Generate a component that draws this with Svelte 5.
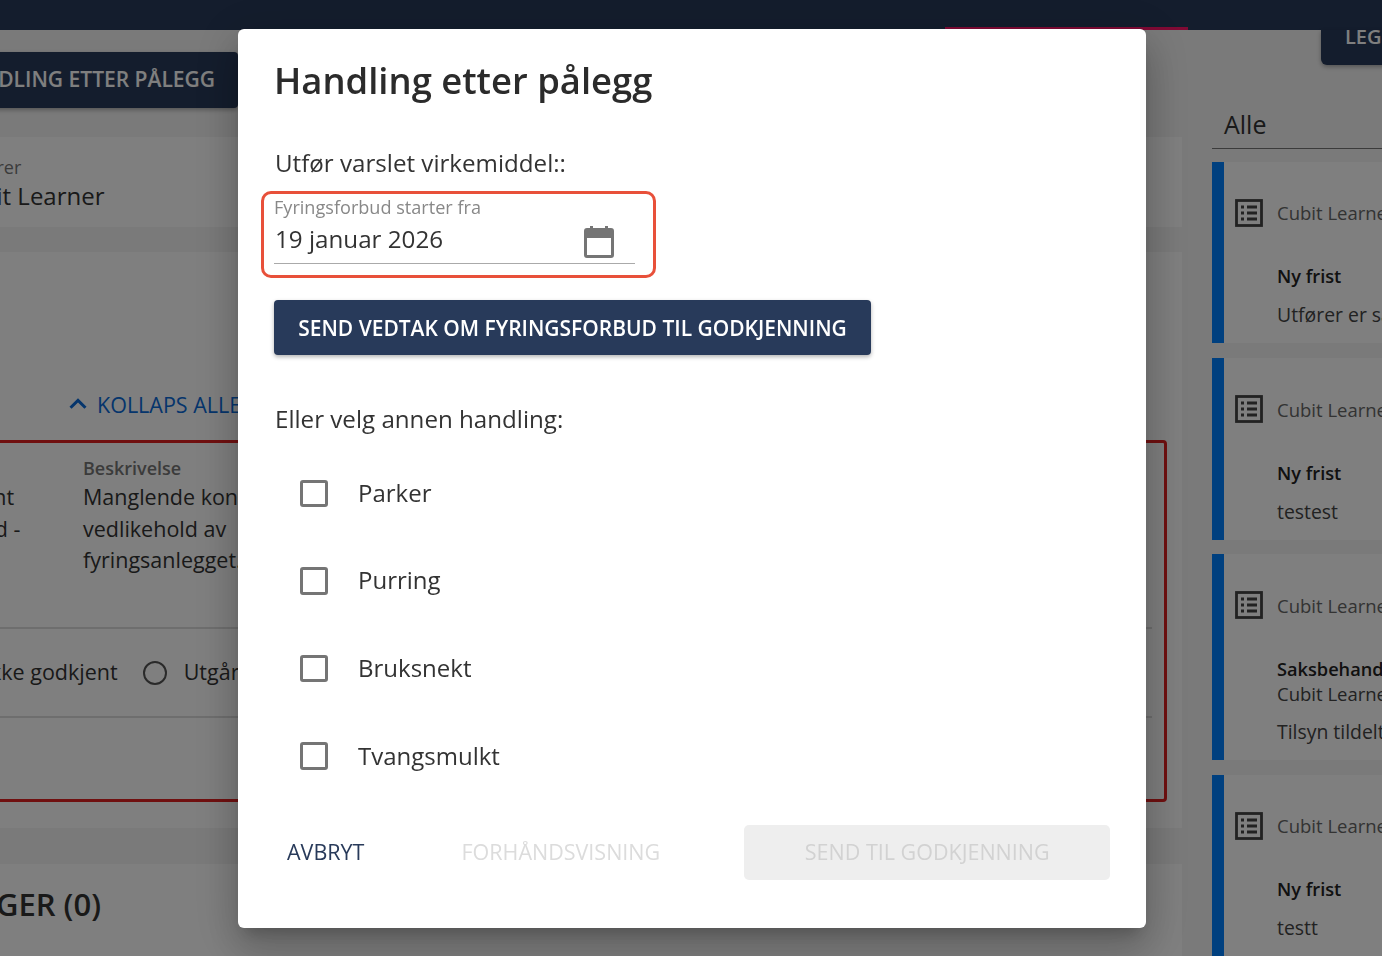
<script lang="ts">
	interface FeedItem {
		title: string;
		sub?: string;
		text: string;
	}

	const feed: FeedItem[] = [
		{ title: 'Ny frist', text: 'Utfører er satt opp på ny frist' },
		{ title: 'Ny frist', text: 'testest' },
		{ title: 'Saksbehandler endret', sub: 'Cubit Learner', text: 'Tilsyn tildelt saksbehandler' },
		{ title: 'Ny frist', text: 'testt' }
	];

	const actions = ['Parker', 'Purring', 'Bruksnekt', 'Tvangsmulkt'];
	let checked = $state<Record<string, boolean>>({});
</script>

<div class="page">
	<header class="topbar">
		<div class="tab-line"></div>
		<button class="legend">LEGEND</button>
	</header>

	<main class="layout">
		<section class="left">
			<div class="action-row">
				<button class="dark-btn">BEHANDLING ETTER PÅLEGG</button>
			</div>

			<div class="card info">
				<div class="small">Utfører</div>
				<div class="value">Cubit Learner</div>
			</div>

			<div class="card deviations">
				<div class="collapse">
					<svg viewBox="0 0 24 24" width="32" height="32"><path d="M7.2 15.6 12 10.8l4.8 4.8 1.6-1.6L12 7.6 5.6 14z" fill="currentColor" /></svg>
					<span>KOLLAPS ALLE</span>
				</div>
				<div class="red-box">
					<div class="columns">
						<div class="col-a">
							<div class="small strong">Type</div>
							<div>Moment</div>
							<div>Tilstand -</div>
						</div>
						<div class="col-b">
							<div class="small strong">Beskrivelse</div>
							<div>Manglende kontroll og</div>
							<div>vedlikehold av</div>
							<div>fyringsanlegget.</div>
						</div>
					</div>
					<div class="radios">
						<span class="radio-text">Ikke godkjent</span>
						<span class="radio"></span>
						<span>Utgår</span>
					</div>
					<div class="empty-row"></div>
				</div>
			</div>

			<div class="card bottom">
				<div class="bottom-title">VEDLEGGER (0)</div>
			</div>
		</section>

		<aside class="right">
			<div class="tab-title">Alle</div>
			{#each feed as item}
				<article class="feed-card">
					<div class="feed-head">
						<svg viewBox="0 0 28 28" width="28" height="28" fill="none" stroke="currentColor" stroke-width="2.8">
							<rect x="1.5" y="1.5" width="25" height="25" />
							<path d="M12 8h10M12 14h10M12 20h10M6 8h3M6 14h3M6 20h3" />
						</svg>
						<span>Cubit Learner</span>
					</div>
					<div class="feed-title">{item.title}</div>
					{#if item.sub}
						<div class="feed-sub">{item.sub}</div>
					{/if}
					<div class="feed-text">{item.text}</div>
				</article>
			{/each}
		</aside>
	</main>
</div>

<div class="scrim">
	<div class="modal">
		<h2>Handling etter pålegg</h2>
		<p class="lead">Utfør varslet virkemiddel::</p>

		<div class="field">
			<div class="field-label">Fyringsforbud starter fra</div>
			<div class="field-input">
				<span>19 januar 2026</span>
				<svg viewBox="0 0 30 33" width="30" height="33">
					<path d="M3 3h3V1h3v2h12V1h3v2h3a3 3 0 0 1 3 3v24a3 3 0 0 1-3 3H3a3 3 0 0 1-3-3V6a3 3 0 0 1 3-3zm0 10v17h24V13z" fill="currentColor" />
				</svg>
			</div>
		</div>

		<button class="primary">SEND VEDTAK OM FYRINGSFORBUD TIL GODKJENNING</button>

		<p class="lead other">Eller velg annen handling:</p>

		<div class="checks">
			{#each actions as action}
				<label class="check">
					<input type="checkbox" bind:checked={checked[action]} />
					<span class="box"></span>
					<span>{action}</span>
				</label>
			{/each}
		</div>

		<div class="footer">
			<button class="text-btn">AVBRYT</button>
			<button class="text-btn" disabled>FORHÅNDSVISNING</button>
			<button class="send" disabled>SEND TIL GODKJENNING</button>
		</div>
	</div>
</div>

<style>
	:global(body) {
		margin: 0;
		overflow: hidden;
		font-family: "Open Sans", sans-serif;
		color: #333;
		background: #f4f4f4;
	}

	button {
		font-family: inherit;
		border: none;
	}

	.page {
		height: 956px;
		overflow: hidden;
		background: #f4f4f4;
	}

	.topbar {
		position: relative;
		height: 30px;
		background: #283a5a;
	}

	.tab-line {
		position: absolute;
		right: 194px;
		bottom: 0;
		width: 243px;
		height: 3px;
		background: #ff1469;
	}

	.legend {
		position: absolute;
		left: 1321px;
		top: 30px;
		width: 140px;
		height: 35px;
		padding: 0 0 21px 24px;
		text-align: left;
		font-size: 20px;
		line-height: 14px;
		font-weight: 600;
		color: #fff;
		background: #283a5a;
		border-radius: 0 0 0 6px;
		box-shadow: 0 2px 4px rgba(0, 0, 0, 0.3);
		white-space: nowrap;
	}

	.layout {
		display: grid;
		grid-template-columns: 1382px 300px;
		gap: 30px;
		margin-left: -200px;
	}

	.left {
		display: flex;
		flex-direction: column;
	}

	.action-row {
		display: flex;
		justify-content: flex-end;
		padding: 22px 944px 29px 0;
	}

	.dark-btn {
		height: 56px;
		padding: 0 23px 3px;
		font-size: 21px;
		font-weight: 600;
		color: #fff;
		background: #283a5a;
		border-radius: 4px;
		box-shadow: 0 2px 4px rgba(0, 0, 0, 0.3);
		white-space: nowrap;
	}

	.card {
		background: #fff;
	}

	.info {
		height: 90px;
		box-sizing: border-box;
		padding: 18px 0 0 160px;
		margin-bottom: 25px;
	}

	.small {
		font-size: 18px;
		line-height: 24px;
		color: #777;
	}

	.strong {
		font-weight: 600;
	}

	.value {
		margin: -1px 0 0 -8px;
		font-size: 24px;
		line-height: 36px;
	}

	.deviations {
		height: 576px;
		box-sizing: border-box;
		padding: 135px 15px 0 0;
		margin-bottom: 36px;
	}

	.collapse {
		display: flex;
		align-items: center;
		gap: 3px;
		margin-left: 262px;
		height: 34px;
		font-size: 21.5px;
		color: #0a6ad8;
	}

	.red-box {
		margin-top: 19px;
		height: 362px;
		box-sizing: border-box;
		border: 3px solid #e02020;
		border-radius: 4px;
		padding-top: 13px;
		font-size: 21.5px;
	}

	.columns {
		display: flex;
		height: 171px;
		line-height: 31.5px;
		border-bottom: 2px solid #ddd;
		margin-right: 12px;
	}

	.col-a {
		width: 154px;
		margin-left: 126px;
		flex: none;
	}

	.col-a .small {
		visibility: hidden;
	}

	.col-b .small,
	.col-a .small {
		line-height: 24px;
		margin-bottom: 1px;
	}

	.radios {
		display: flex;
		align-items: center;
		height: 87px;
		box-sizing: content-box;
		padding-left: 181px;
		border-bottom: 2px solid #ddd;
		margin-right: 12px;
		white-space: nowrap;
	}

	.radio-text,
	.radios span:last-child {
		margin-bottom: 2px;
	}

	.radio {
		width: 20px;
		height: 20px;
		border: 2.5px solid #555;
		border-radius: 50%;
		margin: 0 17px 0 25px;
		flex: none;
	}

	.bottom {
		height: 120px;
	}

	.bottom-title {
		padding: 19px 0 0 80px;
		font-size: 31px;
		font-weight: 600;
		white-space: nowrap;
	}

	.right {
		display: flex;
		flex-direction: column;
		gap: 14.75px;
	}

	.tab-title {
		height: 119px;
		box-sizing: border-box;
		padding: 77px 0 0 12px;
		margin-bottom: -2px;
		font-size: 25px;
		line-height: 34px;
		border-bottom: 1px solid #777;
	}

	.feed-card {
		min-height: 181.5px;
		box-sizing: border-box;
		padding: 37px 0 15px 11px;
		background: #fff;
		border-left: 12px solid #0080ff;
		white-space: nowrap;
	}

	.feed-head {
		display: flex;
		align-items: center;
		gap: 14px;
		height: 28px;
		color: #666;
		font-size: 18.5px;
	}

	.feed-head svg {
		flex: none;
		color: #444;
	}

	.feed-title {
		margin: 36.5px 0 0 42px;
		font-size: 18.2px;
		font-weight: 600;
		line-height: 26px;
		color: #222;
	}

	.feed-sub {
		margin: 0 0 1.5px 42px;
		font-size: 18.5px;
		line-height: 24px;
		color: #444;
	}

	.feed-text {
		margin: 13px 0 0 42px;
		font-size: 19.4px;
		line-height: 26px;
		color: #444;
	}

	.scrim {
		position: fixed;
		inset: 0;
		box-sizing: border-box;
		padding-left: 2px;
		display: flex;
		align-items: center;
		justify-content: center;
		background: rgba(0, 0, 0, 0.5);
	}

	.modal {
		width: 908px;
		height: 899px;
		box-sizing: border-box;
		padding: 23px 36px 0 37px;
		background: #fff;
		border-radius: 6px;
		color: #333;
		box-shadow: 0 11px 15px -7px rgba(0, 0, 0, 0.2), 0 24px 38px 3px rgba(0, 0, 0, 0.14), 0 9px 46px 8px rgba(0, 0, 0, 0.12);
	}

	h2 {
		margin: 0 0 0 -1px;
		font-size: 36.4px;
		line-height: 56px;
		font-weight: 600;
		color: #2b2b2b;
	}

	.lead {
		margin: 0;
		font-size: 24.15px;
		line-height: 34px;
	}

	.modal > .lead:first-of-type {
		margin-top: 38px;
	}

	.field {
		width: 395px;
		height: 87px;
		box-sizing: border-box;
		margin: 11px 0 22px -14px;
		padding: 2px 18px 0 10px;
		border: 3px solid #e8503a;
		border-radius: 10px;
	}

	.field-label {
		font-size: 18.1px;
		line-height: 22px;
		color: #888;
	}

	.field-input {
		display: flex;
		align-items: center;
		justify-content: space-between;
		height: 45px;
		padding: 0 21px 0 1px;
		font-size: 24.2px;
		border-bottom: 1px solid #aaa;
	}

	.field-input span {
		margin-bottom: 3px;
	}

	.field-input svg {
		color: #757575;
		margin-top: 2px;
	}

	.primary {
		display: block;
		width: 597px;
		height: 55px;
		margin-left: -1px;
		padding-top: 2px;
		font-size: 20.97px;
		font-weight: 600;
		color: #fff;
		background: #283a5a;
		border-radius: 4px;
		box-shadow: 0 2px 4px rgba(0, 0, 0, 0.3);
		white-space: nowrap;
	}

	.other {
		margin-top: 47px;
	}

	.checks {
		margin-top: 13px;
	}

	.check {
		display: flex;
		align-items: center;
		height: 87.6px;
		padding-left: 25px;
		font-size: 24px;
	}

	.check input {
		display: none;
	}

	.box {
		width: 21.5px;
		height: 21.5px;
		border: 3px solid #757575;
		border-radius: 3px;
		margin: 2px 30.5px 0 0;
		flex: none;
	}

	.check input:checked + .box {
		background: #283a5a;
		border-color: #283a5a;
	}

	.footer {
		display: flex;
		align-items: center;
		margin-top: 26px;
	}

	.text-btn {
		padding: 0 0 2px;
		background: none;
		font-size: 21.5px;
		color: #283a5a;
		white-space: nowrap;
	}

	.text-btn:first-child {
		margin: 0 97px 0 12px;
	}

	.text-btn:disabled {
		color: #dcdcdc;
	}

	.send {
		flex: none;
		width: 366px;
		height: 55px;
		margin-left: 84px;
		padding-bottom: 2px;
		font-size: 21.5px;
		color: #d2d2d2;
		background: #eee;
		border-radius: 5px;
		white-space: nowrap;
	}
</style>
